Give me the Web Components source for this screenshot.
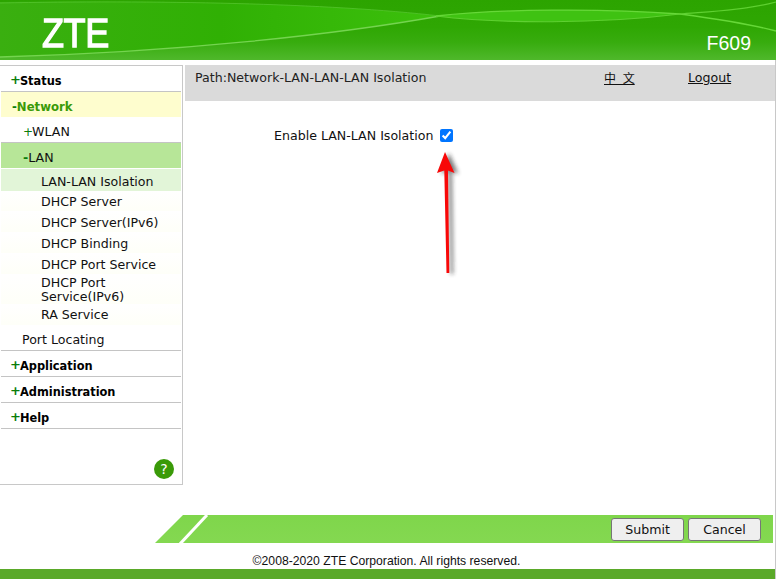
<!DOCTYPE html>
<html><head><meta charset="utf-8">
<style>
html,body{margin:0;padding:0;background:#fff}
body{font-family:"DejaVu Sans",sans-serif;font-size:12.6px;color:#111;width:778px;height:579px;overflow:hidden}
</style></head><body>
<zte-app>
<zte-header slot="header"></zte-header>
<zte-menu slot="menu">
<zte-item level="top" mark="+">Status</zte-item>
<zte-item level="top-open" mark="-">Network</zte-item>
<zte-item level="sub" mark="+" h="25">WLAN</zte-item>
<zte-item level="sub-open" mark="-">LAN</zte-item>
<zte-item level="leaf" active h="23">LAN-LAN Isolation</zte-item>
<zte-item level="leaf" h="20">DHCP Server</zte-item>
<zte-item level="leaf" shift h="21">DHCP Server(IPv6)</zte-item>
<zte-item level="leaf" shift h="21">DHCP Binding</zte-item>
<zte-item level="leaf" shift h="21">DHCP Port Service</zte-item>
<zte-item level="leaf" h="30">DHCP Port Service(IPv6)</zte-item>
<zte-item level="leaf" h="21">RA Service</zte-item>
<zte-item level="sub" last h="26">Port Locating</zte-item>
<zte-item level="top" mark="+">Application</zte-item>
<zte-item level="top" mark="+">Administration</zte-item>
<zte-item level="top" mark="+">Help</zte-item>
</zte-menu>
<zte-content slot="content"></zte-content>
<zte-footer slot="footer"></zte-footer>
</zte-app>
<script>
function def(name,css,html,init){
  customElements.define(name,class extends HTMLElement{
    constructor(){super();this.attachShadow({mode:'open'}).innerHTML='<style>'+css+'</style>'+html;}
    connectedCallback(){if(init)init(this);}
  });
}
def('zte-app',`:host{display:flex;flex-direction:column;width:778px;height:579px}
.body{flex:1;display:flex;flex-direction:column;width:776px;box-sizing:border-box;border-right:1px solid #c8c8c8;min-height:0}
.main{display:flex;height:420px;margin-top:5px}
.foot{flex:1;display:flex;flex-direction:column;min-height:0}`,
`<slot name="header"></slot><div class="body"><div class="main"><slot name="menu"></slot><slot name="content"></slot></div><div class="foot"><slot name="footer"></slot></div></div>`);

def('zte-header',`:host{display:block;position:relative;width:776px;height:60px;overflow:hidden;color:#fff}
svg{position:absolute;left:0;top:0}
.row{position:relative;display:flex;justify-content:space-between;height:60px}
.logo{font:400 41px/1 "Liberation Sans",sans-serif;-webkit-text-stroke:1.3px #fff;letter-spacing:-.5px;margin:13px 0 0 42px;transform:scaleX(.88);transform-origin:0 0;height:41px}
.model{font:19.500px/1 "Liberation Sans",sans-serif;padding:34px 25px 0 0}`,
`<svg width="776" height="60" viewBox="0 0 776 60">
<defs><linearGradient id="g" x1="0" y1="0" x2="0" y2="1"><stop offset="0" stop-color="#2ca400"/><stop offset=".45" stop-color="#2fa703"/><stop offset=".7" stop-color="#37ac0e"/><stop offset="1" stop-color="#4fb82b"/></linearGradient>
<linearGradient id="l" x1="0" y1="0" x2="1" y2="0"><stop offset="0" stop-color="#3aaf10"/><stop offset=".5" stop-color="#30b004"/><stop offset="1" stop-color="#3cc00c"/></linearGradient>
<filter id="b" x="-5%" y="-50%" width="110%" height="200%"><feGaussianBlur stdDeviation=".6"/></filter></defs>
<rect width="776" height="60" fill="url(#g)"/>
<path d="M0 2C150 0 330 3 440 16C340 34 180 52 0 57Z" fill="url(#l)"/>
<path d="M436 16C500 9 600 8 680 14C600 24 500 24 436 16Z" fill="#3fc212"/>
<g fill="none" filter="url(#b)">
<path d="M0 3C150 0 330 3 440 16" stroke="#58c832" stroke-width="1" opacity=".7"/>
<path d="M0 57C180 52 340 34 440 16" stroke="#74d450" stroke-width="1.300"/>
<path d="M436 16C500 9 600 8 680 14C710 18 750 24 776 31" stroke="#66d838" stroke-width="1.300"/>
<path d="M436 16C500 24 600 24 680 14C695 12 740 12 776 2" stroke="#5ed030" stroke-width="1.200"/>
</g></svg>
<div class="row"><div class="logo">ZTE</div><div class="model">F609</div></div>`);

def('zte-menu',`:host{display:flex;flex-direction:column;box-sizing:border-box;width:183px;height:420px;border-top:1px solid #c8c8c8;border-right:1px solid #c8c8c8;border-bottom:1px solid #c8c8c8;padding-right:1px}
.help{margin:auto 7px 5px auto;width:20px;height:20px;border-radius:50%;background:#3a9a08;color:#fff;font:14px/20px "DejaVu Sans",sans-serif;text-align:center}`,
`<slot></slot><div class="help">?</div>`);

def('zte-item',`:host{display:block;box-sizing:border-box;margin-left:1px}
.r{display:flex;align-items:center;box-sizing:border-box;height:100%;line-height:14px}
.m{color:#0a7d0a;font-weight:700}
:host([level=top]){height:26px;border-bottom:1px solid #c4c4c4;font-weight:700;font-size:11.4px;color:#000}
:host([level=top]) .r{padding:5px 0 0 9px}
:host([level=top]) .m{font-size:13px;line-height:12px;margin-right:-1px;position:relative;top:-1px}
:host([level=top-open]){height:25px;font-weight:700;font-size:11.7px;color:#3a9a08}
:host([level=top-open]) .r{padding:4px 0 0 11px;background:#fefdce}
:host([level=sub]){height:24px}
:host([level=sub]) .r{padding:5px 0 0 22px}
:host([level=sub]) .m{font-weight:400;font-size:12px;margin-right:-1px}
:host([level=sub][last]){border-bottom:1px solid #c4c4c4}
:host([level=sub-open]){height:26px;border-top:1px solid #c4c4c4}
:host([level=sub-open]) .r{padding:4px 0 0 22px;background:#b7e698}
:host([level=leaf]) .r{padding:1px 10px 0 40px;background:linear-gradient(#fff,#feffF8)}
:host([shift]) .r{padding-top:3px}
:host([active]) .r{background:#e2f5d8;margin-top:1px;height:calc(100% - 1px);padding-top:4px}`,
`<div class="r"><span><span class="m"></span><slot></slot></span></div>`,
el=>{el.shadowRoot.querySelector('.m').textContent=el.getAttribute('mark')||'';
 const h=el.getAttribute('h');if(h)el.style.height=h+'px';});

def('zte-content',`:host{display:block;width:590px;margin-left:2px}
.path{display:flex;height:36px;box-sizing:border-box;padding:5px 0 0 10px;background:#dadada;line-height:15px;color:#222}
.path span:first-child{width:409px}
.path a{color:#111;text-decoration:underline}
.zh{width:84px;font-family:"Noto Sans CJK SC","DejaVu Sans",sans-serif;font-size:12px;word-spacing:4px}
.row{display:flex;align-items:center;height:20px;margin-top:24px;padding-left:89px}
input{margin:0 0 0 7px;width:13px;height:13px;accent-color:#0075ff}
.wrap{position:relative}
.arrow{position:absolute;left:235px;top:85px}`,
`<div class="wrap"><div class="path"><span>Path:Network-LAN-LAN-LAN Isolation</span><a class="zh">中 文</a><a>Logout</a></div>
<div class="row"><span>Enable LAN-LAN Isolation</span><input type="checkbox" checked></div>
<svg class="arrow" width="50" height="130" viewBox="0 0 50 130"><defs><filter id="s" x="-60%" y="-20%" width="220%" height="140%"><feGaussianBlur stdDeviation="2.200"/></filter></defs>
<path transform="translate(4 1)" filter="url(#s)" opacity=".6" d="M25 2L34.500 23L28 20.500L29.300 123L26.500 123L24.300 20.500L17 23Z" fill="#222"/>
<path d="M25 2L34.500 23L28 20.500L29.300 123L26.500 123L24.300 20.500L17 23Z" fill="#f80808"/></svg></div>`);

def('zte-footer',`:host{display:flex;flex-direction:column;flex:1;min-height:0}
.bar{display:flex;align-items:center;justify-content:flex-end;height:28px;margin:30px 2px 0 155px;padding-right:12px;background:linear-gradient(#7fd64b,#84d851);clip-path:polygon(0 100%,28px 0,100% 0,100% 100%);position:relative}
.slash{position:absolute;left:24px;top:-1px}
button{font:12.6px "DejaVu Sans",sans-serif;color:#111;width:73px;height:23px;padding:0;margin:0;background:#efefef;border:1px solid #767676;border-radius:3px}
.btns{display:flex;gap:4px}
.copy{box-sizing:border-box;height:26px;padding:11px 2px 0 0;text-align:center;font:12.2px/14px "Liberation Sans",sans-serif;color:#111}
.green{flex:1;background:#5aa929}`,
`<div class="bar"><svg class="slash" width="30" height="30" viewBox="0 0 30 30"><path d="M1 30L28 1" stroke="#fff" stroke-width="3"/></svg><div class="btns"><button>Submit</button><button>Cancel</button></div></div>
<div class="copy">©2008-2020 ZTE Corporation. All rights reserved.</div><div class="green"></div>`);
</script>
</body></html>
